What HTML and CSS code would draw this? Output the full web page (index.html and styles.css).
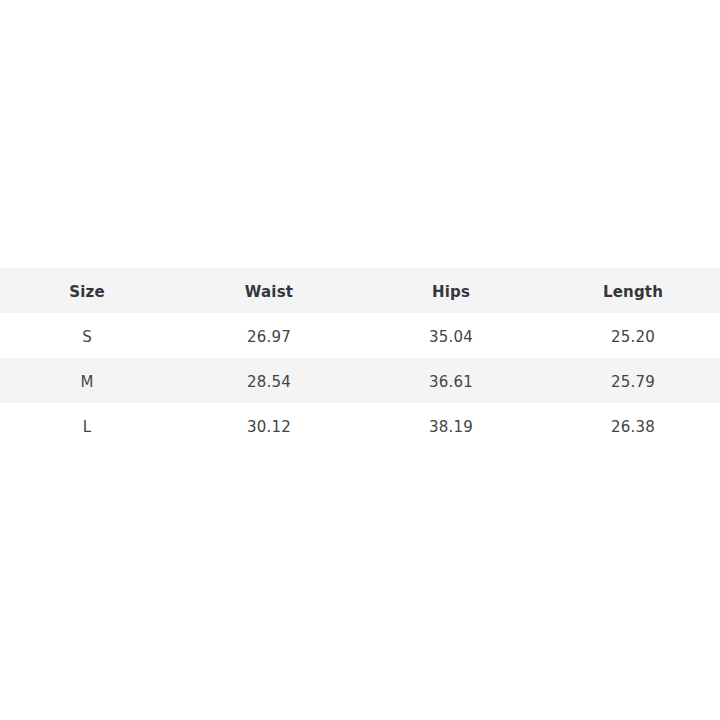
FILE: index.html
```html
<!DOCTYPE html>
<html>
<head>
<meta charset="utf-8">
<link rel="stylesheet" href="styles.css">
</head>
<body>
<div class="page">
  <div class="table">
    <div class="row head">
      <div class="cell">Size</div>
      <div class="cell">Waist</div>
      <div class="cell">Hips</div>
      <div class="cell">Length</div>
    </div>
    <div class="row">
      <div class="cell">S</div>
      <div class="cell">26.97</div>
      <div class="cell">35.04</div>
      <div class="cell">25.20</div>
    </div>
    <div class="row alt">
      <div class="cell">M</div>
      <div class="cell">28.54</div>
      <div class="cell">36.61</div>
      <div class="cell">25.79</div>
    </div>
    <div class="row">
      <div class="cell">L</div>
      <div class="cell">30.12</div>
      <div class="cell">38.19</div>
      <div class="cell">26.38</div>
    </div>
  </div>
</div>
</body>
</html>
```
FILE: styles.css
```css
html, body {
  margin: 0;
  padding: 0;
  background: #ffffff;
  overflow: hidden;
}
.page {
  width: 720px;
  height: 720px;
  padding-top: 268px;
  box-sizing: border-box;
  overflow: hidden;
}
.table {
  width: 728px;
  margin-left: -4px;
  font-family: "DejaVu Sans", Verdana, sans-serif;
  font-size: 15px;
  color: #444444;
}
.row {
  display: grid;
  grid-template-columns: repeat(4, 1fr);
  height: 45px;
  align-items: center;
}
.row.head, .row.alt {
  background: #f4f4f4;
}
.row.head {
  font-weight: bold;
  color: #33373d;
}
.cell {
  text-align: center;
  padding-top: 2px;
  letter-spacing: 0.2px;
}
```
